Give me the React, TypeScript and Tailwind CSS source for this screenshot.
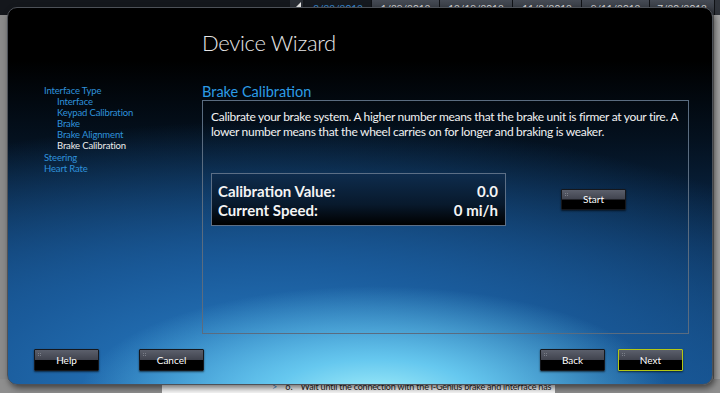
import React from 'react';

const tabs = [
  { label: '2/22/2013', w: 'w-[67px]', active: true },
  { label: '1/29/2013', w: 'w-[68px]', active: false },
  { label: '12/19/2012', w: 'w-[73px]', active: false },
  { label: '11/8/2012', w: 'w-[69px]', active: false },
  { label: '9/11/2012', w: 'w-[68px]', active: false },
  { label: '7/20/2012', w: 'w-[65px]', active: false },
];

const navItems = [
  { label: 'Interface Type', sub: false, current: false },
  { label: 'Interface', sub: true, current: false },
  { label: 'Keypad Calibration', sub: true, current: false },
  { label: 'Brake', sub: true, current: false },
  { label: 'Brake Alignment', sub: true, current: false },
  { label: 'Brake Calibration', sub: true, current: true },
  { label: 'Steering', sub: false, current: false },
  { label: 'Heart Rate', sub: false, current: false },
];

const Grip = () => (
  <span className="absolute left-[3px] top-[3px] grid grid-cols-2 gap-[1px]">
    <span className="w-[1px] h-[1px] bg-[#7a7e88]" />
    <span className="w-[1px] h-[1px] bg-[#7a7e88]" />
    <span className="w-[1px] h-[1px] bg-[#7a7e88]" />
    <span className="w-[1px] h-[1px] bg-[#7a7e88]" />
  </span>
);

const WizardButton = ({ label, highlight = false, h = 'h-[22px]' }: { label: string; highlight?: boolean; h?: string }) => (
  <button
    className={`relative w-[65px] ${h} flex items-center justify-center text-[10px] text-white rounded-[1px] shadow-[0_1px_2px_rgba(0,0,0,0.6)] bg-[linear-gradient(to_bottom,#5b5f6b_0%,#41444f_48%,#000_52%,#000_100%)] ${
      highlight ? 'border-[1.5px] border-[#b4c814]' : 'border border-[#15171c]'
    }`}
  >
    <Grip />
    {label}
  </button>
);

const App: React.FC = () => {
  return (
    <div className="relative w-[720px] h-[393px] overflow-hidden bg-[#8c8c8c] font-['Segoe_UI','Lato',sans-serif]">
      {/* application behind the dialog */}
      <div className="flex flex-col h-full">
        <div className="h-[15px] bg-[#14171c] flex justify-end">
          <div className="w-[13px] h-[15px] mr-[2px] flex items-start justify-center pt-[2px] bg-[#2a2e35]">
            <svg width="8" height="8" viewBox="0 0 8 8">
              <polygon points="8,0 8,8 0,8" fill="#e8e8e8" />
            </svg>
          </div>
          {tabs.map((t) => (
            <div
              key={t.label}
              className={`${t.w} h-[15px] flex justify-center pt-[1px] text-[10px] leading-[14px] border-r border-[#101216] ${
                t.active ? 'bg-[#15191f] text-[#3a90dc]' : 'bg-[linear-gradient(to_bottom,#454a54,#30343b)] text-[#dcdcdc]'
              }`}
            >
              {t.label}
            </div>
          ))}
          <div className="w-[5px] h-[15px] bg-[#30343b]" />
        </div>
        <div className="flex-1 flex justify-between">
          <div className="w-[7px] bg-[#8a8a8a]" />
          <div className="w-[7px] bg-[#a3a3a3] border-l border-[#6c6c6c]" />
        </div>
        <div className="h-[14px] flex">
          <div className="w-[162px] bg-[#8e8e8e]" />
          <div className="w-[393px] overflow-hidden whitespace-nowrap bg-[#f7f7f7] flex items-start pt-[2px] text-[9px] leading-[12px] text-[#222]">
            <span className="ml-[110px] text-[#3a8ad0]">&gt;</span>
            <span className="ml-[8px]">6.</span>
            <span className="ml-[8px] tracking-[-0.2px]">Wait until the connection with the i-Genius brake and interface has</span>
          </div>
          <div className="flex-1 bg-[#8e8e8e]" />
        </div>
      </div>

      {/* dialog */}
      <div className="absolute left-[7px] top-[7px] w-[706px] h-[378px] rounded-[10px] border border-[#4d5158] overflow-hidden shadow-[2px_3px_6px_rgba(0,0,0,0.55)] [background-image:radial-gradient(ellipse_42%_30%_at_52%_104%,#a6f1fa_0%,#66c8ef_35%,rgba(70,160,225,0)_100%),radial-gradient(ellipse_95%_70%_at_38%_100%,#2a80c8_0%,#1a5b9b_45%,rgba(12,45,85,0)_100%),linear-gradient(to_bottom,#000_0%,#000_14%,#04111f_35%,#0b2e55_65%,#124a84_100%)]">
        <div className="flex flex-col h-full">
          <div className="h-[75px] pl-[194px] pt-[21px]">
            <h1 className="text-[22px] leading-[28px] font-light tracking-[-0.3px] text-[#e6e6e6]">Device Wizard</h1>
          </div>

          <div className="flex">
            <nav className="w-[194px] pl-[36px] pt-[2px]">
              {navItems.map((n) => (
                <div
                  key={n.label}
                  className={`text-[9.5px] leading-[11.1px] tracking-[-0.15px] whitespace-nowrap ${n.sub ? 'pl-[13px]' : ''} ${
                    n.current ? 'text-[#ececec]' : 'text-[#2f92dc]'
                  }`}
                >
                  {n.label}
                </div>
              ))}
            </nav>

            <section className="w-[487px]">
              <h2 className="h-[17px] text-[14.5px] leading-[17px] text-[#2c9ce6]">Brake Calibration</h2>
              <div className="h-[234px] border border-[#5a6c80] pl-[8px] pt-[8px]">
                <p className="text-[12px] leading-[15px] tracking-[-0.3px] whitespace-nowrap text-[#f2f2f2]">
                  Calibrate your brake system. A higher number means that the brake unit is firmer at your tire. A
                  <br />
                  lower number means that the wheel carries on for longer and braking is weaker.
                </p>
                <div className="flex items-start mt-[34px]">
                  <div className="w-[295px] h-[53px] border border-[#5c6f86] pl-[6px] pr-[7px] pt-[8px] bg-[linear-gradient(to_bottom,#0e2c4d_0%,#08192c_60%,#000_100%)]">
                    <div className="flex justify-between text-[15px] leading-[19px] font-bold text-[#f4f4f4]">
                      <span>Calibration Value:</span>
                      <span>0.0</span>
                    </div>
                    <div className="flex justify-between text-[15px] leading-[19px] font-bold text-[#f4f4f4]">
                      <span>Current Speed:</span>
                      <span>0 mi/h</span>
                    </div>
                  </div>
                  <div className="ml-[55px] mt-[16px]">
                    <WizardButton label="Start" h="h-[21px]" />
                  </div>
                </div>
              </div>
            </section>
          </div>

          <div className="flex justify-between pl-[26px] pr-[29px] mt-[15px]">
            <div className="flex gap-[40px]">
              <WizardButton label="Help" />
              <WizardButton label="Cancel" />
            </div>
            <div className="flex gap-[13px]">
              <WizardButton label="Back" />
              <WizardButton label="Next" highlight />
            </div>
          </div>
        </div>
      </div>
    </div>
  );
};

export default App;
